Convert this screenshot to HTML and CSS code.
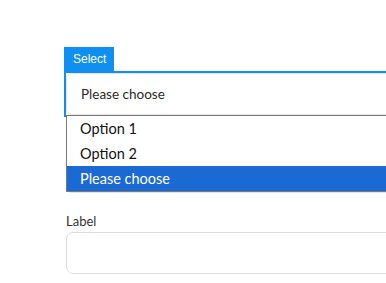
FILE: index.html
```html
<!DOCTYPE html>
<html>
<head>
<meta charset="utf-8">
<link rel="stylesheet" href="styles.css">
</head>
<body>
<div class="page">
  <div class="group">
    <div class="tab">Select</div>
    <div class="field">
      <div class="select">Please choose</div>
      <ul class="menu">
        <li class="opt">Option 1</li>
        <li class="opt">Option 2</li>
        <li class="opt active">Please choose</li>
      </ul>
    </div>
    <div class="under"></div>
  </div>
  <div class="group2">
    <label class="label">Label</label>
    <div class="input"></div>
  </div>
</div>
</body>
</html>
```
FILE: styles.css
```css
html, body {
  margin: 0;
  padding: 0;
  background: #ffffff;
  overflow: hidden;
}
.page {
  padding: 47px 0 0 64px;
  width: 420px;
  font-family: Lato, "Noto Sans", sans-serif;
}
.tab {
  display: inline-block;
  background: #0f8ff0;
  color: #ffffff;
  font-family: "Liberation Sans", Arial, sans-serif;
  font-size: 12px;
  height: 24px;
  line-height: 25px;
  padding: 0 8px 0 9px;
}
.field {
  position: relative;
  border-top: 2px solid #0f8ff0;
  border-left: 2px solid #0f8ff0;
  height: 44px;
}
.select {
  box-sizing: border-box;
  height: 42px;
  border: 1px solid #e4e4e4;
  border-radius: 6px;
  box-shadow: 0 1px 2px rgba(0,0,0,0.06);
  background: #fff;
  padding: 0 0 0 14px;
  line-height: 40px;
  font-size: 13.5px;
  color: #2a2a2a;
}
.menu {
  position: absolute;
  top: 42px;
  left: 0;
  right: -20px;
  margin: 0;
  padding: 0;
  list-style: none;
  background: #fff;
  border: 1px solid #7a7a7a;
  border-right: none;
  z-index: 2;
}
.opt {
  height: 25px;
  line-height: 25px;
  padding-left: 13px;
  font-size: 14.5px;
  color: #111;
}
.opt.active {
  background: #1b69d3;
  color: #ffffff;
}
.under {
  box-sizing: border-box;
  height: 78px;
  margin-top: -2px;
  margin-left: 2px;
  border: 1px solid #e4e4e4;
  border-top: none;
  border-radius: 0 0 6px 6px;
}
.group2 {
  padding-top: 20px;
  margin-left: 2px;
}
.label {
  display: block;
  font-size: 13px;
  color: #333;
  line-height: 16px;
  margin-bottom: 3px;
}
.input {
  box-sizing: border-box;
  height: 42px;
  border: 1px solid #dddddd;
  border-radius: 7px;
  background: #fff;
}
```
